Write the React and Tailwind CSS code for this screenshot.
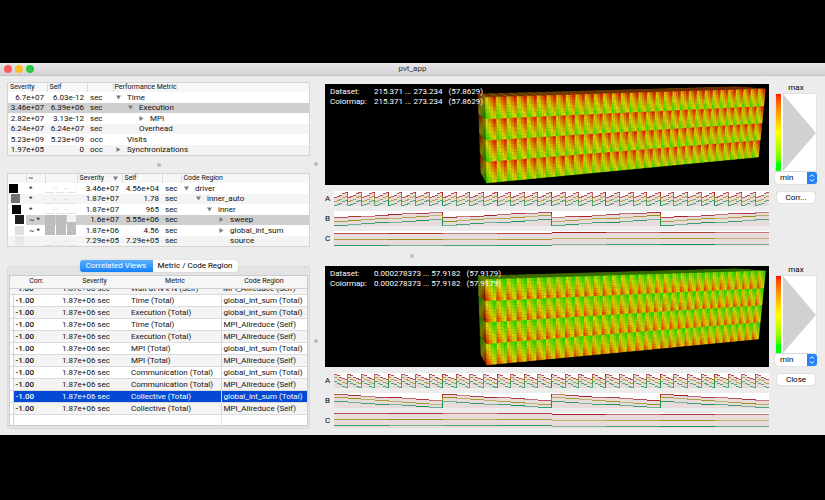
import React from 'react';

const METRICS = [
  { severity: '6.7e+07', self: '6.03e-12', unit: 'sec', name: 'Time', level: 0, arrow: 'down' },
  { severity: '3.46e+07', self: '6.39e+06', unit: 'sec', name: 'Execution', level: 1, arrow: 'down', selected: true },
  { severity: '2.82e+07', self: '3.13e-12', unit: 'sec', name: 'MPI', level: 2, arrow: 'right' },
  { severity: '6.24e+07', self: '6.24e+07', unit: 'sec', name: 'Overhead', level: 1 },
  { severity: '5.23e+09', self: '5.23e+09', unit: 'occ', name: 'Visits', level: 0 },
  { severity: '1.97e+05', self: '0', unit: 'occ', name: 'Synchronizations', level: 0, arrow: 'right' },
];

const REGIONS = [
  { box: 'ml-px bg-black', mark: '*', bars: [0, 0, 0], severity: '3.46e+07', self: '4.56e+04', name: 'driver', level: 0, arrow: 'down' },
  { box: 'ml-[3px] bg-[#727272]', mark: '*', bars: [0, 0, 0], severity: '1.87e+07', self: '1.78', name: 'inner_auto', level: 1, arrow: 'down' },
  { box: 'ml-1 bg-black', mark: '*', bars: [0, 0, 0], severity: '1.87e+07', self: '965', name: 'inner', level: 2, arrow: 'down' },
  { box: 'ml-[7px] bg-[#202020]', mark: '~ *', bars: [10, 10, 3], severity: '1.6e+07', self: '5.55e+06', name: 'sweep', level: 3, arrow: 'right', selected: true },
  { box: 'ml-[7px] bg-[#e0e0e0]', mark: '~ *', bars: [10, 10, 10], severity: '1.87e+06', self: '4.56', name: 'global_int_sum', level: 3, arrow: 'right' },
  { box: 'ml-[7px] bg-[#e8e8e8]', mark: '', bars: [0, 0, 0], severity: '7.29e+05', self: '7.29e+05', name: 'source', level: 3 },
];

const VIEWS = [
  ['Time (Total)', 'global_int_sum (Total)'],
  ['Execution (Total)', 'global_int_sum (Total)'],
  ['Time (Total)', 'MPI_Allreduce (Self)'],
  ['Execution (Total)', 'MPI_Allreduce (Self)'],
  ['MPI (Total)', 'global_int_sum (Total)'],
  ['MPI (Total)', 'MPI_Allreduce (Self)'],
  ['Communication (Total)', 'global_int_sum (Total)'],
  ['Communication (Total)', 'MPI_Allreduce (Self)'],
  ['Collective (Total)', 'global_int_sum (Total)'],
  ['Collective (Total)', 'MPI_Allreduce (Self)'],
];

const INDENT = ['pl-[3px]', 'pl-[15px]', 'pl-[26px]', 'pl-[38px]'];

function Arrow({ dir }) {
  return (
    <svg className="h-[5px] w-[5px] shrink-0" viewBox="0 0 5 5">
      {dir === 'down' && <path d="M0 0.5H5L2.5 4.5Z" fill="#7d7d7d" />}
      {dir === 'right' && <path d="M0.5 0V5L4.5 2.5Z" fill="#7d7d7d" />}
    </svg>
  );
}

function TreeCell({ row }) {
  return (
    <td className="p-0">
      <div className={`flex items-center gap-[6px] ${INDENT[row.level]}`}>
        <Arrow dir={row.arrow} />
        {row.name}
      </div>
    </td>
  );
}

function rowShade(row, i) {
  if (row.selected) return 'bg-[#cfcfcf]';
  return i % 2 ? 'bg-[#f4f4f4]' : 'bg-white';
}

const TREE_TABLE =
  'h-[72px] w-full table-fixed border-collapse text-[8px] leading-[9px] text-[#111]';
const HEAD_CELL = 'border-r border-[#dcdcdc] p-0 pl-[2px] text-left font-normal';

function MetricTable() {
  return (
    <div className="border border-[#d4d4d4] bg-white">
      <table className={TREE_TABLE}>
        <colgroup>
          <col className="w-[39px]" />
          <col className="w-[40px]" />
          <col className="w-[26px]" />
          <col />
        </colgroup>
        <thead>
          <tr className="h-[9px] bg-[#f6f6f6] text-[7px]">
            <th className={HEAD_CELL}>Severity</th>
            <th className={HEAD_CELL}>Self</th>
            <th className={HEAD_CELL}></th>
            <th className="p-0 pl-px text-left font-normal">Performance Metric</th>
          </tr>
        </thead>
        <tbody>
          {METRICS.map((row, i) => (
            <tr key={row.name} className={rowShade(row, i)}>
              <td className="p-0 pr-[3px] text-right">{row.severity}</td>
              <td className="p-0 pr-[3px] text-right">{row.self}</td>
              <td className="p-0 pl-[3px]">{row.unit}</td>
              <TreeCell row={row} />
            </tr>
          ))}
        </tbody>
      </table>
    </div>
  );
}

function MiniBars({ bars }) {
  return (
    <svg className="block h-[10px] w-[31px]" viewBox="0 0 31 10" shapeRendering="crispEdges">
      {bars.map((h, i) =>
        h > 0 ? (
          <g key={i}>
            <rect x={i * 11} y="0" width="10" height="10" fill="#f2f2f2" />
            <rect x={i * 11} y={10 - h} width="10" height={h} fill="#bdbdbd" />
          </g>
        ) : (
          <g key={i} fill="#dcdcdc">
            <rect x={i * 11} y="9" width="9" height="1" fill="#e2e2e2" />
            <rect x={i * 11} y="5" width="1" height="1" />
            <rect x={i * 11 + 8} y="5" width="2" height="1" />
          </g>
        )
      )}
    </svg>
  );
}

function RegionTable() {
  return (
    <div className="border border-[#d4d4d4] bg-white">
      <table className={TREE_TABLE}>
        <colgroup>
          <col className="w-[18px]" />
          <col className="w-[19px]" />
          <col className="w-[32px]" />
          <col className="w-[45px]" />
          <col className="w-[40px]" />
          <col className="w-[19px]" />
          <col />
        </colgroup>
        <thead>
          <tr className="h-[9px] bg-[#f6f6f6] text-[7px]">
            <th className={HEAD_CELL}></th>
            <th className={HEAD_CELL}>~</th>
            <th className={HEAD_CELL}></th>
            <th className={HEAD_CELL}>
              <div className="flex items-center justify-between pr-1">
                Severity
                <Arrow dir="down" />
              </div>
            </th>
            <th className={HEAD_CELL}>Self</th>
            <th className={HEAD_CELL}></th>
            <th className="p-0 pl-[2px] text-left font-normal">Code Region</th>
          </tr>
        </thead>
        <tbody>
          {REGIONS.map((row, i) => (
            <tr key={row.name} className={rowShade(row, i)}>
              <td className={row.selected ? 'bg-white p-0' : 'p-0'}>
                <div className={`h-[9px] w-[9px] ${row.box}`}></div>
              </td>
              <td className="whitespace-nowrap p-0 pl-[3px]">{row.mark}</td>
              <td className="p-0">
                <MiniBars bars={row.bars} />
              </td>
              <td className="p-0 pr-[3px] text-right">{row.severity}</td>
              <td className="p-0 pr-[3px] text-right">{row.self}</td>
              <td className="p-0 pl-[3px]">sec</td>
              <TreeCell row={row} />
            </tr>
          ))}
        </tbody>
      </table>
    </div>
  );
}

function CorrelatedViews() {
  const cell = 'whitespace-nowrap p-0 pl-[2px]';
  return (
    <div className="flex flex-col items-center">
      <div className="z-10 flex h-3 rounded-[3px] bg-white text-[8px] leading-3 shadow-[0_0_1px_#9a9a9a]">
        <button className="w-[73px] rounded-l-[3px] bg-linear-to-b from-[#5cb0fb] to-[#1080fb] text-white">
          Correlated Views
        </button>
        <button className="w-[85px] text-black">Metric / Code Region</button>
      </div>
      <div className="-mt-[6px] w-full rounded-[3px] border border-[#dadada] bg-[#e3e3e3] px-px pt-2 pb-[2px]">
        <div className="h-[151px] overflow-hidden border border-[#cccccc] bg-white">
          <table className="w-full table-fixed border-collapse text-[8px] leading-[11px] text-[#111]">
            <colgroup>
              <col className="w-[3px]" />
              <col className="w-[47px]" />
              <col className="w-[69px]" />
              <col className="w-[92px]" />
              <col />
            </colgroup>
            <thead>
              <tr className="h-3 border-b border-[#cfcfcf] bg-[#f6f6f6] text-[7px]">
                <th className="p-0"></th>
                <th className="p-0 font-normal">Corr.</th>
                <th className="p-0 font-normal">Severity</th>
                <th className="p-0 font-normal">Metric</th>
                <th className="p-0 font-normal">Code Region</th>
              </tr>
            </thead>
            <tbody>
              <tr className="border-b border-[#dadada] bg-[#f4f4f4]">
                {['', '-1.00', '1.87e+06 sec', 'Wait at N x N (Self)', 'MPI_Allreduce (Self)'].map((t, i) => (
                  <td key={i} className={cell}>
                    <div className={`flex h-[5px] items-end overflow-hidden ${i === 1 ? 'font-medium' : ''}`}>{t}</div>
                  </td>
                ))}
              </tr>
              {VIEWS.map(([metric, region], i) => {
                const on = i === 8;
                const tone = on ? 'bg-[#0449d3] text-white' : '';
                return (
                  <tr key={i} className={`h-3 border-b border-[#dadada] ${i % 2 ? 'bg-[#f4f4f4]' : 'bg-white'}`}>
                    <td className="border-r border-[#d0d0d0] bg-white p-0"></td>
                    <td className={`${cell} font-medium ${tone}`}>-1.00</td>
                    <td className={`${cell} ${tone}`}>1.87e+06 sec</td>
                    <td className={`${cell} ${tone}`}>{metric}</td>
                    <td className={`${cell} border-l border-[#d6d6d6] ${tone}`}>{region}</td>
                  </tr>
                );
              })}
              <tr className="h-3">
                <td className="border-r border-[#d0d0d0] p-0"></td>
                <td className="p-0" colSpan={3}></td>
                <td className="border-l border-[#e4e4e4] p-0"></td>
              </tr>
            </tbody>
          </table>
        </div>
      </div>
    </div>
  );
}

// Corners of the visible faces, clockwise from the upper left.
const FRONT = [[160.5, 13.5], [440.5, 5], [433.5, 73], [161.5, 99]];
const SIDE = [[153, 10], [160.5, 13.5], [161.5, 99], [156, 89]];
const TOP = [[153, 10], [412, 3], [440.5, 5], [160.5, 13.5]];

function project(face, u, v) {
  const w = u / (u + (1 - u) * 0.83);
  const mix = (a, b, t) => a + (b - a) * t;
  return [0, 1]
    .map((k) => mix(mix(face[0][k], face[1][k], w), mix(face[3][k], face[2][k], w), v).toFixed(2))
    .join(' ');
}

function heat(value, light) {
  const r = Math.min(1, 0.08 + value * 1.9) * 222;
  const g = Math.min(1, 0.08 + (1 - value) * 1.9) * 216;
  return `rgb(${Math.round(r * light)},${Math.round(g * light)},0)`;
}

function buildFace(face, cols, rows, subCols, subRows, light, invert, valueOf) {
  const groups = {};
  const nx = cols * subCols;
  const ny = rows * subRows;
  for (let y = 0; y < ny; y++) {
    for (let x = 0; x < nx; x++) {
      const a = (x % subCols) / Math.max(1, subCols - 1);
      const b = (y % subRows) / Math.max(1, subRows - 1);
      const raw = valueOf(a, b);
      const color = heat(invert ? 1 - raw : raw, light);
      const d = `M${project(face, x / nx, y / ny)}L${project(face, (x + 1) / nx, y / ny)}L${project(face, (x + 1) / nx, (y + 1) / ny)}L${project(face, x / nx, (y + 1) / ny)}Z`;
      groups[color] = (groups[color] || '') + d;
    }
  }
  return Object.entries(groups);
}

function BlockView({ invert, range, delta }) {
  const layers = [
    ...buildFace(TOP, 32, 4, 4, 1, 0.52, invert, (a) => 0.5 + 0.35 * a),
    ...buildFace(SIDE, 1, 4, 4, 8, 0.6, invert, (a, b) => 0.45 * (1 - a) + 0.5 * (1 - b)),
    ...buildFace(FRONT, 32, 4, 4, 8, 1, invert, (a, b) => 0.12 + 0.4 * a + 0.44 * (1 - b)),
  ];
  return (
    <div className="relative bg-black">
      <svg
        className="block h-[101px] w-full"
        viewBox="0 0 444 101"
        preserveAspectRatio="xMaxYMid meet"
      >
        {layers.map(([color, d], i) => (
          <path key={i} d={d} fill={color} stroke={color} strokeWidth="0.4" />
        ))}
      </svg>
      <dl className="absolute top-[3px] left-[5px] grid grid-cols-[44px_auto_auto] text-[8px] leading-[10px] whitespace-nowrap text-white">
        <dt>Dataset:</dt>
        <dd>{range}</dd>
        <dd className="pl-[6px]">({delta})</dd>
        <dt>Colormap:</dt>
        <dd>{range}</dd>
        <dd className="pl-[6px]">({delta})</dd>
      </dl>
    </div>
  );
}

const LINE_COLORS = ['#a81f25', '#989010', '#15935a'];
const FADE = [0.75, 0.9, 0.5, 0.8, 1, 0.6, 0.85, 0.55];

function StepChart({ label, teeth, steps, lines }) {
  const width = 435;
  const tooth = width / teeth;
  const step = tooth / steps;
  const area = [];
  const marks = [];
  for (let t = 0; t < teeth; t++) {
    for (let s = 0; s < steps; s++) {
      const x = t * tooth + s * step;
      const level = ([from, to]) => Math.round(from + ((to - from) * s) / (steps - 1));
      const top = level(lines[0]);
      area.push(`M${x} ${top}h${step}V15h-${step}Z`);
      lines.forEach((line, k) => {
        const fade = teeth > 8 ? 0.75 : FADE[(s + k * 3 + t) % 8];
        marks.push(
          <rect key={`${t}-${s}-${k}`} x={x} y={level(line)} width={step + 0.2} height="1" fill={LINE_COLORS[k]} opacity={fade} />
        );
      });
    }
    if (t > 0) {
      lines.forEach(([from, to], k) => {
        marks.push(
          <rect
            key={`v${t}-${k}`}
            x={t * tooth - 0.5}
            y={Math.min(from, to)}
            width="1"
            height={Math.abs(to - from) + 1}
            fill={LINE_COLORS[k]}
            opacity={t % 4 === 0 || teeth < 8 ? 1 : 0.7}
          />
        );
      });
    }
  }
  return (
    <div className="flex items-center">
      <span className="w-[9px] text-[8px] leading-[10px]">{label}</span>
      <svg
        className="h-[15px] min-w-0 flex-1 bg-white"
        viewBox="0 0 435 15"
        preserveAspectRatio="none"
        shapeRendering="crispEdges"
      >
        <path d={area.join('')} fill="#e7dbdb" />
        {marks}
      </svg>
    </div>
  );
}

function ColorScale({ id, action }) {
  return (
    <div className="flex flex-col">
      <label htmlFor={id} className="h-[9px] text-center text-[8px] leading-[8px]">
        max
      </label>
      <div className="flex h-[79px] gap-[2px] border border-[#e2e2e2] bg-white">
        <div className="w-[5px] bg-linear-to-b from-[#ff0000] via-[#ffff00] to-[#00ff00] to-90%"></div>
        <svg className="h-full min-w-0 flex-1" viewBox="0 0 32 77" preserveAspectRatio="none">
          <path d="M0 0L32 39L0 77Z" fill="#d1d1d1" />
        </svg>
      </div>
      <div className="relative h-3">
        <select
          id={id}
          className="block h-3 w-full appearance-none rounded-[3px] bg-white py-0 pr-3 pl-[5px] text-[8px] leading-3 shadow-[0_0_1px_#999]"
          defaultValue="min"
        >
          <option>min</option>
        </select>
        <svg className="pointer-events-none absolute top-0 right-0 h-3 w-[10px]" viewBox="0 0 10 12">
          <path d="M0 0H7Q10 0 10 3V9Q10 12 7 12H0Z" fill="#2383fb" />
          <path d="M3 4.7L5 2.7L7 4.7M3 7.3L5 9.3L7 7.3" fill="none" stroke="#fff" strokeWidth="1" />
        </svg>
      </div>
      <button className="mx-[2px] mt-2 h-[11px] rounded-[2px] bg-white text-[8px] leading-[11px] shadow-[0_0_1px_#888]">
        {action}
      </button>
    </div>
  );
}

function ViewGroup({ id, action, invert, range, delta, charts }) {
  return (
    <section className="grid grid-cols-[minmax(0,1fr)_42px] gap-x-[6px]">
      <div>
        <BlockView invert={invert} range={range} delta={delta} />
        <div className="mt-[6px] flex flex-col gap-[5px]">
          {charts.map((chart) => (
            <StepChart key={chart.label} {...chart} />
          ))}
        </div>
      </div>
      <ColorScale id={id} action={action} />
    </section>
  );
}

function Grip() {
  return <span className="h-1 w-1 rounded-full bg-[#bcbcbc]"></span>;
}

const RISING = [
  { label: 'A', teeth: 32, steps: 5, lines: [[6, 1], [10, 5], [14, 9]] },
  { label: 'B', teeth: 4, steps: 8, lines: [[6, 1], [10, 4], [14, 8]] },
  { label: 'C', teeth: 1, steps: 8, lines: [[2, 1], [8, 7], [14, 13]] },
];

const FALLING = [
  { label: 'A', teeth: 32, steps: 5, lines: [[1, 6], [4, 10], [8, 14]] },
  { label: 'B', teeth: 4, steps: 8, lines: [[1, 7], [4, 11], [8, 14]] },
  { label: 'C', teeth: 1, steps: 8, lines: [[0, 1], [6, 7], [12, 13]] },
];

export default function App() {
  return (
    <div className="min-h-screen bg-black py-[63px] font-['Roboto','Liberation_Sans',sans-serif]">
      <div className="bg-[#ececec] text-black">
        <header className="grid h-[13px] grid-cols-[1fr_auto_1fr] items-center border-b border-[#c6c4c6] bg-linear-to-b from-[#e8e6e8] to-[#d3d1d3] px-1">
          <div className="flex gap-[3px]">
            <span className="h-2 w-2 rounded-full bg-[#fc5b57]"></span>
            <span className="h-2 w-2 rounded-full bg-[#fdbc2e]"></span>
            <span className="h-2 w-2 rounded-full bg-[#28c840]"></span>
          </div>
          <h1 className="text-[8px] leading-3 text-[#333]">pvt_app</h1>
        </header>
        <main className="grid grid-cols-[minmax(0,303fr)_15px_minmax(0,492fr)] pr-2 pb-[6px] pl-[7px]">
          <div className="flex flex-col pt-[6px]">
            <MetricTable />
            <div className="flex h-[17px] items-center justify-center">
              <Grip />
            </div>
            <RegionTable />
            <div className="h-[13px]"></div>
            <CorrelatedViews />
          </div>
          <div className="flex flex-col pl-1">
            <div className="flex flex-1 items-center">
              <Grip />
            </div>
            <div className="flex flex-1 items-center">
              <Grip />
            </div>
          </div>
          <div className="pt-2">
            <ViewGroup id="scale-top" action="Corr..." range="215.371 ... 273.234" delta="57.8629" charts={RISING} />
            <div className="flex h-5 items-center pl-[85px]">
              <Grip />
            </div>
            <ViewGroup id="scale-bottom" action="Close" invert range="0.000278373 ... 57.9182" delta="57.9179" charts={FALLING} />
          </div>
        </main>
      </div>
    </div>
  );
}
